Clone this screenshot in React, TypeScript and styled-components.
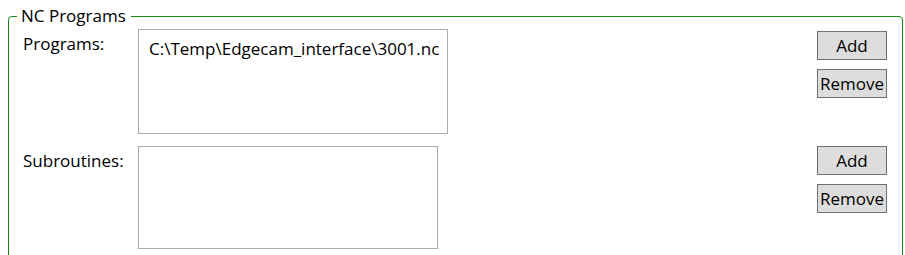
import React from "react";
import styled, { createGlobalStyle } from "styled-components";

const Global = createGlobalStyle`
  html, body { margin: 0; padding: 0; background: #ffffff; }
  body { font-family: "Open Sans", "Noto Sans", sans-serif; color: #000; }
`;

const Page = styled.div`
  width: 905px;
  height: 255px;
  overflow: hidden;
  padding: 7px 0 0 8px;
  box-sizing: border-box;
`;

const Group = styled.fieldset`
  margin: 0;
  width: 895px;
  box-sizing: border-box;
  border: 1px solid #148c14;
  border-radius: 4px;
  padding: 4px 15px 20px 14px;
  min-height: 300px;
`;

const Legend = styled.legend`
  margin-left: -6px;
  padding: 0 5px 0 4px;
  font-size: 17px;
  line-height: 18px;
  color: #000;
`;

const Row = styled.div<{ $gap: number }>`
  display: flex;
  align-items: flex-start;
  margin-bottom: ${(p) => p.$gap}px;
`;

const Label = styled.div`
  width: 115px;
  flex: 0 0 115px;
  font-size: 17px;
  line-height: 22px;
  padding-top: 4px;
`;

const ListBox = styled.div<{ $w: number; $h: number }>`
  width: ${(p) => p.$w}px;
  height: ${(p) => p.$h}px;
  box-sizing: border-box;
  border: 1px solid #acacac;
  background: #fff;
  padding: 8px 10px;
`;

const Item = styled.div`
  font-size: 17px;
  line-height: 22px;
  white-space: nowrap;
`;

const Spacer = styled.div`
  flex: 1 1 auto;
`;

const Buttons = styled.div<{ $top: number }>`
  display: flex;
  flex-direction: column;
  gap: 9px;
  padding-top: ${(p) => p.$top}px;
  width: 70px;
`;

const Button = styled.button`
  width: 70px;
  height: 29px;
  box-sizing: border-box;
  margin: 0;
  padding: 0;
  border: 1px solid #707070;
  background: #dddddd;
  font-family: inherit;
  font-size: 17px;
  color: #000;
  line-height: 1;
`;

export default function App() {
  return (
    <>
      <Global />
      <Page>
        <Group>
          <Legend>NC Programs</Legend>
          <Row $gap={12}>
            <Label>Programs:</Label>
            <ListBox $w={310} $h={105}>
              <Item>C:\Temp\Edgecam_interface\3001.nc</Item>
            </ListBox>
            <Spacer />
            <Buttons $top={2}>
              <Button>Add</Button>
              <Button>Remove</Button>
            </Buttons>
          </Row>
          <Row $gap={0}>
            <Label>Subroutines:</Label>
            <ListBox $w={300} $h={103} />
            <Spacer />
            <Buttons $top={0}>
              <Button>Add</Button>
              <Button>Remove</Button>
            </Buttons>
          </Row>
        </Group>
      </Page>
    </>
  );
}
